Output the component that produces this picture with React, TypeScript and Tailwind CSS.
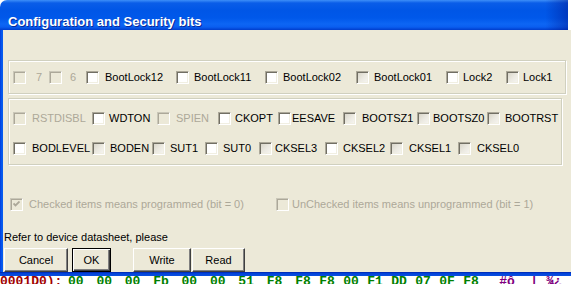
import React from "react";

type BoxKind = "on" | "dim" | "off";

type Item = { label: string; w?: number; kind: BoxKind; gap?: number };

const font = { fontFamily: '"Liberation Sans", Arial, sans-serif' };

function CheckBox({ kind, checked }: { kind: BoxKind; checked?: boolean }) {
    const face =
        kind === "on"
            ? "bg-white"
            : kind === "dim"
              ? "bg-[linear-gradient(135deg,#d6d3c6_0%,#eceae2_55%,#f7f6f2_100%)]"
              : "bg-[#ece9d8]";
    const edge =
        kind === "off"
            ? "border-t-[#cac7b8] border-l-[#cac7b8] shadow-[inset_1px_1px_0_#aca899]"
            : "border-t-[#aca899] border-l-[#aca899] shadow-[inset_1px_1px_0_#716f64,inset_-1px_-1px_0_#f1efe2]";
    return (
        <span className={`flex items-center justify-center w-[13px] h-[13px] shrink-0 border border-r-white border-b-white ${edge} ${face}`}>
            {checked && (
                <svg width="7" height="7" viewBox="0 0 7 7">
                    <path d="M0.5 2.5 L2.5 4.5 L6.5 0.5" fill="none" stroke="#aca899" strokeWidth="1.8" />
                </svg>
            )}
        </span>
    );
}

function Check({ item }: { item: Item }) {
    return (
        <div
            className="flex items-center shrink-0"
            style={item.w ? { width: item.w, gap: item.gap ?? 6 } : { gap: item.gap ?? 6 }}
        >
            <CheckBox kind={item.kind} />
            <span className={`text-[11px] leading-[13px] whitespace-nowrap ${item.kind === "off" ? "text-[#aca899]" : "text-black"}`}>
                {item.label}
            </span>
        </div>
    );
}

const lockRow: Item[] = [
    { label: "7", w: 36, kind: "off", gap: 10 },
    { label: "6", w: 37, kind: "off", gap: 8 },
    { label: "BootLock12", w: 90, kind: "on", gap: 6 },
    { label: "BootLock11", w: 89, kind: "on", gap: 5 },
    { label: "BootLock02", w: 91, kind: "on", gap: 5 },
    { label: "BootLock01", w: 90, kind: "dim", gap: 5 },
    { label: "Lock2", w: 60, kind: "on", gap: 4 },
    { label: "Lock1", kind: "dim", gap: 4 },
];

const fuseRow1: Item[] = [
    { label: "RSTDISBL", w: 79, kind: "off" },
    { label: "WDTON", w: 65, kind: "on", gap: 4 },
    { label: "SPIEN", w: 61, kind: "off", gap: 6 },
    { label: "CKOPT", w: 60, kind: "on", gap: 4 },
    { label: "EESAVE", w: 65, kind: "on", gap: 1 },
    { label: "BOOTSZ1", w: 74, kind: "dim", gap: 6 },
    { label: "BOOTSZ0", w: 70, kind: "dim", gap: 3 },
    { label: "BOOTRST", kind: "dim", gap: 5 },
];

const fuseRow2: Item[] = [
    { label: "BODLEVEL", w: 79, kind: "on" },
    { label: "BODEN", w: 60, kind: "dim", gap: 5 },
    { label: "SUT1", w: 53, kind: "dim", gap: 5 },
    { label: "SUT0", w: 54, kind: "on", gap: 5 },
    { label: "CKSEL3", w: 66, kind: "dim", gap: 3 },
    { label: "CKSEL2", w: 65, kind: "on", gap: 5 },
    { label: "CKSEL1", w: 68, kind: "dim", gap: 6 },
    { label: "CKSEL0", kind: "dim", gap: 6 },
];

function Button({ label, w, def }: { label: string; w: number; def?: boolean }) {
    return (
        <div
            className={`h-[24px] shrink-0 flex items-center justify-center bg-[#ece9d8] text-[11px] text-black ${
                def
                    ? "border border-black shadow-[inset_1px_1px_0_#fff,inset_-1px_-1px_0_#404040,inset_-2px_-2px_0_#808080]"
                    : "border border-t-white border-l-white border-r-[#404040] border-b-[#404040] shadow-[inset_-1px_-1px_0_#808080]"
            }`}
            style={{ width: w }}
        >
            {label}
        </div>
    );
}

const bytesA = ["00", "00", "00", "Fb", "00", "00", "51", "F8"];
const bytesB = ["F8", "F8", "00", "F1", "DD", "07", "0F", "F8"];

export default function App() {
    return (
        <div className="w-[571px] h-[284px] overflow-hidden bg-white flex flex-col" style={font}>
            {/* Title bar */}
            <div className="h-[30px] shrink-0 flex bg-white">
                <div className="flex-1 rounded-tl-[7px] bg-[linear-gradient(to_bottom,#3d8ff8_0px,#0a5de8_3px,#0056e6_10px,#0058ea_18px,#0d66f4_24px,#0a5ef0_27px,#003dcc_30px)]">
                    <div className="h-full bg-[linear-gradient(to_right,transparent_0%,transparent_96%,rgba(0,20,140,0.45)_100%)] pl-[8px] pt-[9px]">
                        <span className="text-[13px] leading-[16px] font-bold text-white [text-shadow:1px_1px_0_#0a2a9a]">
                            Configuration and Security bits
                        </span>
                    </div>
                </div>
                <div className="w-[3px]" />
            </div>

            {/* Body */}
            <div className="h-[242px] shrink-0 flex">
                <div className="w-[3px] shrink-0 bg-[linear-gradient(to_right,#0831d9_0px,#0055ea_1px,#0a5cf0_3px)]" />
                <div className="flex-1 bg-[#ece9d8] flex flex-col">
                    <div className="mt-[30px] ml-[5px] w-[558px] h-[34px] border border-[#d0d0bf] shadow-[inset_1px_1px_0_#fff,1px_1px_0_#fff] flex items-center pl-[4px]">
                        {lockRow.map((it) => (
                            <Check key={it.label} item={it} />
                        ))}
                    </div>

                    <div className="mt-[4px] ml-[5px] w-[554px] h-[67px] border border-[#d0d0bf] shadow-[inset_1px_1px_0_#fff,1px_1px_0_#fff] flex flex-col pl-[4px] pt-[13px] gap-[17px]">
                        <div className="flex items-center">
                            {fuseRow1.map((it) => (
                                <Check key={it.label} item={it} />
                            ))}
                        </div>
                        <div className="flex items-center">
                            {fuseRow2.map((it) => (
                                <Check key={it.label} item={it} />
                            ))}
                        </div>
                    </div>

                    <div className="mt-[33px] ml-[7px] flex items-center h-[13px]">
                        <div className="w-[266px] flex items-center gap-[6px]">
                            <CheckBox kind="off" checked />
                            <span className="text-[11px] text-[#aca899] whitespace-nowrap">Checked items means programmed (bit = 0)</span>
                        </div>
                        <div className="flex items-center gap-[3px]">
                            <CheckBox kind="off" />
                            <span className="text-[11px] text-[#aca899] whitespace-nowrap">UnChecked items means unprogrammed (bit = 1)</span>
                        </div>
                    </div>

                    <div className="mt-[19px] ml-[1px] text-[11px] leading-[14px] text-black">
                        Refer to device datasheet, please
                    </div>

                    <div className="mt-[4px] ml-[1px] flex">
                        <Button label="Cancel" w={64} />
                        <div className="w-[4px]" />
                        <Button label="OK" w={39} def />
                        <div className="w-[22px]" />
                        <Button label="Write" w={58} />
                        <div className="w-[1px]" />
                        <Button label="Read" w={53} />
                    </div>
                </div>
            </div>

            {/* Bottom frame */}
            <div className="h-[4px] shrink-0 bg-[linear-gradient(to_bottom,#001c9e_0px,#0040d8_1px,#0a4fe0_4px)]" />

            {/* Hex view underneath, cut by the window edge */}
            <div
                className="flex items-start h-[8px] overflow-hidden text-[13px] leading-[12px] font-bold whitespace-pre"
                style={{ fontFamily: '"Liberation Mono", "Courier New", monospace' }}
            >
                <span className="w-[68px] shrink-0 text-[#a00000]">0001D0):</span>
                {bytesA.map((b, i) => (
                    <span key={"a" + i} className="w-[28.4px] shrink-0 text-[#008000]">
                        {b}
                    </span>
                ))}
                {bytesB.map((b, i) => (
                    <span key={"b" + i} className="w-[24px] shrink-0 text-[#008000]">
                        {b}
                    </span>
                ))}
                <span className="w-[12px] shrink-0" />
                <span className="shrink-0 text-[#800080]">#ô  | ¾¿</span>
            </div>
        </div>
    );
}
